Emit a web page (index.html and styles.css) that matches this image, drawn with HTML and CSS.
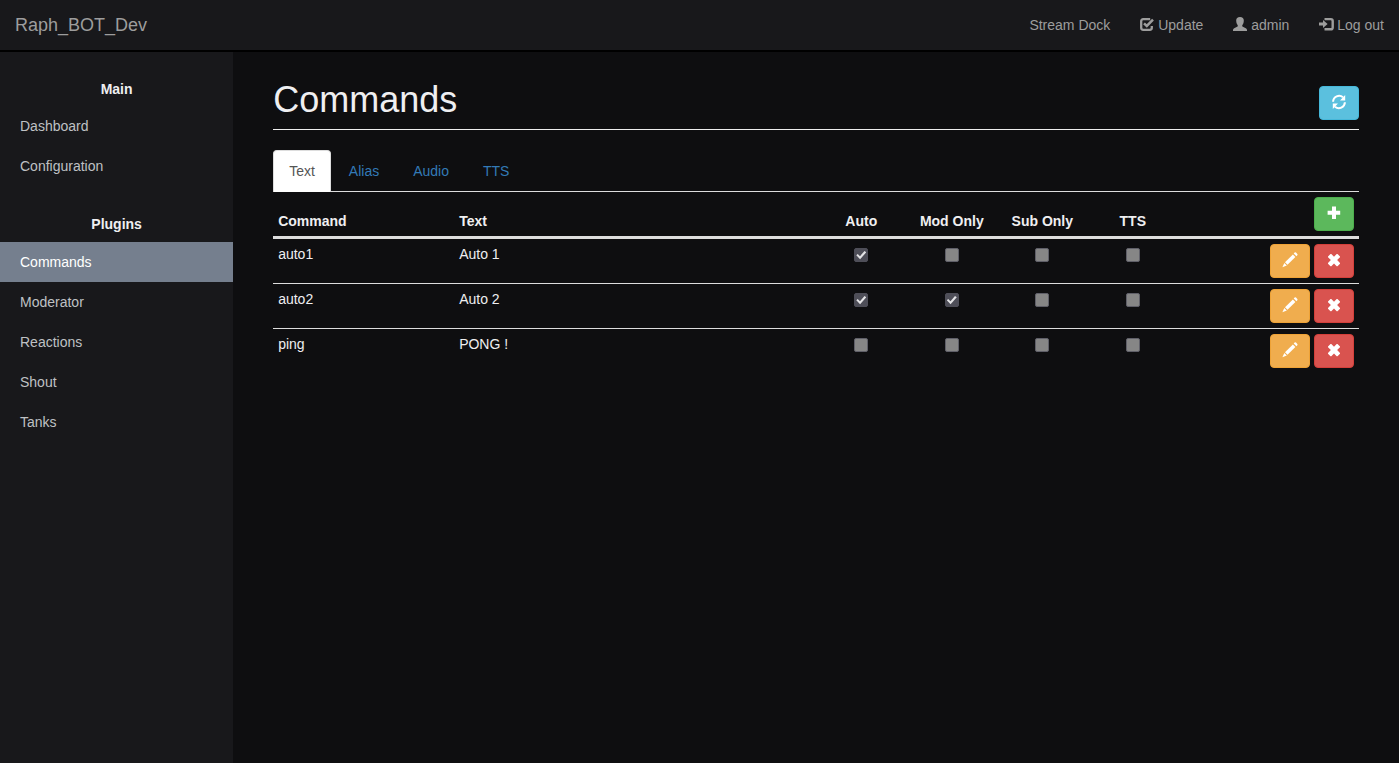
FILE: index.html
```html
<!DOCTYPE html>
<html lang="en">
<head>
<meta charset="utf-8">
<title>Raph_BOT_Dev - Commands</title>
<link rel="stylesheet" href="styles.css">
</head>
<body>
<svg class="sprite" aria-hidden="true">
  <symbol id="check" viewBox="0 0 14 14"><path d="M10.200 2.200H3.200Q1.200 2.200 1.200 4.200v6.600Q1.200 12.800 3.200 12.800h6.600Q11.800 12.800 11.800 10.800V9" fill="none" stroke="currentColor" stroke-width="2.300"/><path d="M4 6.300l2.800 2.700L13 2.700" fill="none" stroke="currentColor" stroke-width="2.500"/></symbol>
  <symbol id="user" viewBox="0 0 14 14"><path d="M7 0C9.500 0 10.800 1.400 10.800 3.600c0 1.300-.2 2.300-.6 3.200-.4.800-.9 1.200-1 1.800 0 .8.300 1.100 1.200 1.500l2.400 1.100c.8.400 1.200 1 1.200 1.800v1H0v-1c0-.8.400-1.400 1.200-1.800l2.400-1.100C4.500 9.700 4.800 9.400 4.800 8.600c-.1-.6-.6-1-1-1.800-.4-.9-.6-1.900-.6-3.200C3.200 1.400 4.500 0 7 0z"/></symbol>
  <symbol id="login" viewBox="0 0 14 14"><path d="M0 5.600h4V3l4.600 4L4 11V8.400H0z"/><path d="M5.500 2.100h6.300q1.900 0 1.900 1.900v6.400q0 1.900-1.900 1.900H5.500" fill="none" stroke="currentColor" stroke-width="2.400"/></symbol>
  <symbol id="refresh" viewBox="0 0 14 14"><path d="M1.100 6.700A6 6 0 0 1 11 2.300" fill="none" stroke="currentColor" stroke-width="2"/><path d="M13.200 0v5.400H8z"/><path d="M12.900 7.300A6 6 0 0 1 3 11.700" fill="none" stroke="currentColor" stroke-width="2"/><path d="M.8 14V8.600H6z"/></symbol>
  <symbol id="plus" viewBox="0 0 14 14"><path d="M5 .4h4v4.400h4.200v4H9v4.300H5V8.800H.6v-4H5z"/></symbol>
  <symbol id="pencil" viewBox="0 0 14 14"><path d="M11.600-.4q.7-.6 1.400 0l1.300 1.300q.6.700 0 1.400l-.9.9L10.700.5z"/><path d="M9.900 1.400l2.500 2.500-7.900 7.900L2 9.300z"/><path d="M1.300 10l2.500 2.500-4.400 1.700z"/></symbol>
  <symbol id="remove" viewBox="0 0 14 14"><path d="M3.500 1h.8L7 3.700 9.700 1h.8L13 3.500v.8L10.100 7.100l2.900 2.800v.8l-2.500 2.500h-.8L7 10.500l-2.700 2.700h-.8L1 10.700v-.8l2.900-2.800L1 4.300v-.8z"/></symbol>
</svg>

<header class="navbar">
  <a class="brand" href="#">Raph_BOT_Dev</a>
  <nav class="navbar-links">
    <a href="#">Stream Dock</a>
    <a href="#"><svg class="icon"><use href="#check"/></svg> Update</a>
    <a href="#"><svg class="icon"><use href="#user"/></svg> admin</a>
    <a href="#"><svg class="icon"><use href="#login"/></svg> Log out</a>
  </nav>
</header>

<div class="layout">
  <nav class="sidebar">
    <h2>Main</h2>
    <a href="#">Dashboard</a>
    <a href="#">Configuration</a>
    <h2>Plugins</h2>
    <a class="active" href="#">Commands</a>
    <a href="#">Moderator</a>
    <a href="#">Reactions</a>
    <a href="#">Shout</a>
    <a href="#">Tanks</a>
  </nav>

  <main class="main">
    <div class="page-header">
      <h1>Commands</h1>
      <button class="btn btn-info" aria-label="Refresh"><svg class="icon"><use href="#refresh"/></svg></button>
    </div>

    <nav class="tabs">
      <a class="active" href="#">Text</a>
      <a href="#">Alias</a>
      <a href="#">Audio</a>
      <a href="#">TTS</a>
    </nav>

    <table class="commands">
      <colgroup><col class="w2"><col class="w4"><col class="w1"><col class="w1"><col class="w1"><col class="w1"><col class="w2"></colgroup>
      <thead>
        <tr>
          <th>Command</th><th>Text</th>
          <th class="center">Auto</th><th class="center">Mod Only</th><th class="center">Sub Only</th><th class="center">TTS</th>
          <th class="actions"><button class="btn btn-success" aria-label="Add command"><svg class="icon"><use href="#plus"/></svg></button></th>
        </tr>
      </thead>
      <tbody>
        <tr>
          <td>auto1</td><td>Auto 1</td>
          <td class="center"><input type="checkbox" aria-label="Auto" checked disabled></td>
          <td class="center"><input type="checkbox" aria-label="Mod Only" disabled></td>
          <td class="center"><input type="checkbox" aria-label="Sub Only" disabled></td>
          <td class="center"><input type="checkbox" aria-label="TTS" disabled></td>
          <td class="actions"><button class="btn btn-warning" aria-label="Edit auto1"><svg class="icon"><use href="#pencil"/></svg></button> <button class="btn btn-danger" aria-label="Delete auto1"><svg class="icon"><use href="#remove"/></svg></button></td>
        </tr>
        <tr>
          <td>auto2</td><td>Auto 2</td>
          <td class="center"><input type="checkbox" aria-label="Auto" checked disabled></td>
          <td class="center"><input type="checkbox" aria-label="Mod Only" checked disabled></td>
          <td class="center"><input type="checkbox" aria-label="Sub Only" disabled></td>
          <td class="center"><input type="checkbox" aria-label="TTS" disabled></td>
          <td class="actions"><button class="btn btn-warning" aria-label="Edit auto2"><svg class="icon"><use href="#pencil"/></svg></button> <button class="btn btn-danger" aria-label="Delete auto2"><svg class="icon"><use href="#remove"/></svg></button></td>
        </tr>
        <tr>
          <td>ping</td><td>PONG !</td>
          <td class="center"><input type="checkbox" aria-label="Auto" disabled></td>
          <td class="center"><input type="checkbox" aria-label="Mod Only" disabled></td>
          <td class="center"><input type="checkbox" aria-label="Sub Only" disabled></td>
          <td class="center"><input type="checkbox" aria-label="TTS" disabled></td>
          <td class="actions"><button class="btn btn-warning" aria-label="Edit ping"><svg class="icon"><use href="#pencil"/></svg></button> <button class="btn btn-danger" aria-label="Delete ping"><svg class="icon"><use href="#remove"/></svg></button></td>
        </tr>
      </tbody>
    </table>
  </main>
</div>
</body>
</html>
```
FILE: styles.css
```css
* {
  box-sizing: border-box;
}

body {
  margin: 0;
  min-height: 100vh;
  display: flex;
  flex-direction: column;
  background: #0e0e10;
  color: #efeff1;
  font: 14px/20px "Liberation Sans", Arial, sans-serif;
}

a {
  text-decoration: none;
}

.sprite {
  display: none;
}

.icon {
  width: 14px;
  height: 14px;
  fill: currentColor;
  vertical-align: -1px;
  overflow: visible;
}

symbol {
  overflow: visible;
}

/* Top bar */
.navbar {
  display: flex;
  justify-content: space-between;
  background: #18181b;
  border-bottom: 2px solid #000;
}

.navbar a {
  display: block;
  padding: 15px;
  color: #9d9d9d;
}

.navbar .brand {
  font-size: 18px;
}

.navbar-links {
  display: flex;
}

/* Sidebar */
.layout {
  flex: 1;
  display: flex;
}

.sidebar {
  flex: none;
  width: 16.6667%;
  padding-top: 27px;
  background: #18181b;
}

.sidebar h2 {
  margin: 0 0 7px;
  font-size: 14px;
  line-height: 20px;
  text-align: center;
}

.sidebar a + h2 {
  margin: 28px 0 8px;
}

.sidebar a {
  display: block;
  padding: 10px 20px;
  color: #bfc1c4;
}

.sidebar a.active {
  background: #757f8e;
  color: #fff;
}

/* Content */
.main {
  flex: 1;
  min-width: 0;
  padding: 28px 40px 20px;
}

.page-header {
  display: flex;
  justify-content: space-between;
  align-items: flex-end;
  margin-bottom: 20px;
  padding-bottom: 9px;
  border-bottom: 1px solid #eee;
}

.page-header h1 {
  margin: 0;
  font-size: 36px;
  font-weight: 400;
  line-height: 40px;
}

.tabs {
  display: flex;
  gap: 2px;
  border-bottom: 1px solid #ddd;
}

.tabs a {
  padding: 10px 15px;
  border: 1px solid transparent;
  border-bottom: 0;
  border-radius: 4px 4px 0 0;
  color: #337ab7;
}

.tabs a.active {
  margin-bottom: -1px;
  padding-bottom: 11px;
  background: #fff;
  border-color: #ddd;
  color: #555;
}

.commands {
  width: 100%;
  table-layout: fixed;
  border-collapse: separate;
  border-spacing: 0;
}

.w1 {
  width: 8.3333%;
}

.w2 {
  width: 16.6667%;
}

.w4 {
  width: 33.3333%;
}

.commands th,
.commands td {
  padding: 5px;
  text-align: left;
  vertical-align: top;
}

.commands th {
  vertical-align: bottom;
  border-bottom: 3px solid #ddd;
}

.commands tr + tr td {
  border-top: 1px solid #ddd;
}

.commands .center {
  text-align: center;
}

.commands .actions {
  text-align: right;
  white-space: nowrap;
}

input[type="checkbox"] {
  appearance: none;
  width: 14px;
  height: 14px;
  margin: 4px 0 0;
  background: #868686;
  border: 1px solid #5f5f68;
  border-radius: 2px;
  vertical-align: top;
}

input[type="checkbox"]:checked {
  background: #4e4e58;
  border-color: #4e4e58;
}

input[type="checkbox"]:checked::before {
  content: "";
  display: block;
  width: 10px;
  height: 9px;
  margin: 2px 1px;
  background: #e4e4e6;
  clip-path: polygon(0 48%, 14% 33%, 37% 57%, 82% 0, 100% 14%, 38% 92%);
}

/* Buttons */
.btn {
  padding: 6px 12px;
  border: 1px solid;
  border-radius: 4px;
  color: #fff;
  font: inherit;
  vertical-align: top;
  cursor: pointer;
}

.btn .icon {
  color: #fff;
}

.btn-info {
  background: #5bc0de;
  border-color: #46b8da;
}

.btn-success {
  background: #5cb85c;
  border-color: #4cae4c;
}

.btn-warning {
  background: #f0ad4e;
  border-color: #eea236;
}

.btn-danger {
  background: #d9534f;
  border-color: #d43f3a;
}
```
